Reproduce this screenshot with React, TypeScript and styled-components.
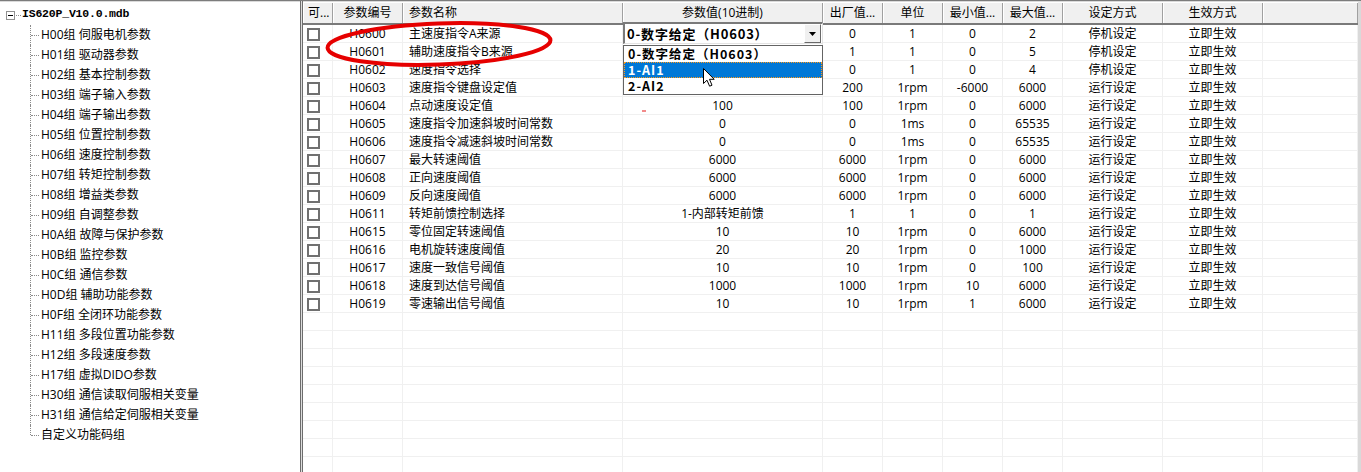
import React from 'react';
import styled, { createGlobalStyle } from 'styled-components';

const GlobalStyle = createGlobalStyle`
  html, body {
    margin: 0;
    padding: 0;
    background: #fff;
  }
  body {
    font-family: 'Open Sans', 'Noto Sans CJK SC', sans-serif;
    font-size: 12px;
    color: #000;
  }
  * {
    box-sizing: border-box;
  }
`;

type Align = 'left' | 'center';

interface Column {
  title: string;
  width: number;
  align: Align;
  pad?: number;
}

const columns: Column[] = [
  { title: '可...', width: 30, align: 'left', pad: 5 },
  { title: '参数编号', width: 70, align: 'center' },
  { title: '参数名称', width: 220, align: 'left', pad: 6 },
  { title: '参数值(10进制)', width: 200, align: 'center' },
  { title: '出厂值...', width: 60, align: 'center' },
  { title: '单位', width: 60, align: 'center' },
  { title: '最小值...', width: 60, align: 'center' },
  { title: '最大值...', width: 60, align: 'center' },
  { title: '设定方式', width: 100, align: 'center' },
  { title: '生效方式', width: 100, align: 'center' },
  { title: '', width: 95, align: 'center' },
];

const gridTemplate = columns.map((c) => `${c.width}px`).join(' ');

const groups = [
  'H00组 伺服电机参数',
  'H01组 驱动器参数',
  'H02组 基本控制参数',
  'H03组 端子输入参数',
  'H04组 端子输出参数',
  'H05组 位置控制参数',
  'H06组 速度控制参数',
  'H07组 转矩控制参数',
  'H08组 增益类参数',
  'H09组 自调整参数',
  'H0A组 故障与保护参数',
  'H0B组 监控参数',
  'H0C组 通信参数',
  'H0D组 辅助功能参数',
  'H0F组 全闭环功能参数',
  'H11组 多段位置功能参数',
  'H12组 多段速度参数',
  'H17组 虚拟DIDO参数',
  'H30组 通信读取伺服相关变量',
  'H31组 通信给定伺服相关变量',
  '自定义功能码组',
];

// code, name, value, factory, unit, min, max, setMode
const params: string[][] = [
  ['H0600', '主速度指令A来源', '', '0', '1', '0', '2', '停机设定'],
  ['H0601', '辅助速度指令B来源', '', '1', '1', '0', '5', '停机设定'],
  ['H0602', '速度指令选择', '', '0', '1', '0', '4', '停机设定'],
  ['H0603', '速度指令键盘设定值', '', '200', '1rpm', '-6000', '6000', '运行设定'],
  ['H0604', '点动速度设定值', '100', '100', '1rpm', '0', '6000', '运行设定'],
  ['H0605', '速度指令加速斜坡时间常数', '0', '0', '1ms', '0', '65535', '运行设定'],
  ['H0606', '速度指令减速斜坡时间常数', '0', '0', '1ms', '0', '65535', '运行设定'],
  ['H0607', '最大转速阈值', '6000', '6000', '1rpm', '0', '6000', '运行设定'],
  ['H0608', '正向速度阈值', '6000', '6000', '1rpm', '0', '6000', '运行设定'],
  ['H0609', '反向速度阈值', '6000', '6000', '1rpm', '0', '6000', '运行设定'],
  ['H0611', '转矩前馈控制选择', '1-内部转矩前馈', '1', '1', '0', '1', '运行设定'],
  ['H0615', '零位固定转速阈值', '10', '10', '1rpm', '0', '6000', '运行设定'],
  ['H0616', '电机旋转速度阈值', '20', '20', '1rpm', '0', '1000', '运行设定'],
  ['H0617', '速度一致信号阈值', '10', '10', '1rpm', '0', '100', '运行设定'],
  ['H0618', '速度到达信号阈值', '1000', '1000', '1rpm', '10', '6000', '运行设定'],
  ['H0619', '零速输出信号阈值', '10', '10', '1rpm', '1', '6000', '运行设定'],
];

const EMPTY_ROWS = 9;

const options = ['0-数字给定（H0603）', '1-AI1', '2-AI2'];

const Frame = styled.div`
  position: relative;
  display: flex;
  width: 1361px;
  height: 472px;
  overflow: hidden;
  border-top: 1px solid #7c7c7c;
  background: #fff;
`;

/* ---------- tree ---------- */

const TreePanel = styled.div`
  width: 300px;
  flex: none;
  border-top: 1px solid #dadada;
  padding-top: 1px;
`;

const TreeRoot = styled.div`
  display: flex;
  align-items: center;
  height: 22px;
  padding-left: 6px;
`;

const ExpandBox = styled.span`
  position: relative;
  width: 9px;
  height: 9px;
  margin-top: 2px;
  border: 1px solid #919191;
  background: #fff;

  &::after {
    content: '';
    position: absolute;
    left: 1px;
    right: 1px;
    top: 3px;
    height: 1px;
    background: #000;
  }
`;

const RootConnector = styled.span`
  width: 5px;
  margin: 2px 1px 0 1px;
  border-top: 1px dotted #8a8a8a;
`;

const RootTitle = styled.span`
  font-family: 'Liberation Mono', 'Noto Sans CJK SC', monospace;
  font-weight: 700;
  font-size: 11.5px;
  letter-spacing: -0.2px;
  line-height: 20px;
`;

const TreeItem = styled.div<{ $last?: boolean }>`
  position: relative;
  height: 20px;
  line-height: 20px;
  padding-left: 41px;
  white-space: nowrap;

  &::before {
    content: '';
    position: absolute;
    left: 30px;
    top: 0;
    bottom: ${(p) => (p.$last ? '10px' : '0')};
    border-left: 1px dotted #8a8a8a;
  }

  &::after {
    content: '';
    position: absolute;
    left: 31px;
    top: 10px;
    width: 8px;
    border-top: 1px dotted #8a8a8a;
  }
`;

const Splitter = styled.div`
  width: 3px;
  flex: none;
  border-left: 1px solid #6d6d6d;
  border-right: 1px solid #6d6d6d;
  background: #dcdcdc;
`;

/* ---------- grid ---------- */

const GridPanel = styled.div`
  flex: 1;
  border-top: 1px solid #dadada;
  padding-top: 1px;
  border-right: 3px solid #d9d9d9;
  overflow: hidden;
`;

const HeaderRow = styled.div`
  display: grid;
  grid-template-columns: ${gridTemplate};
  height: 22px;
  border-bottom: 2px solid #7a7a7a;
  background: #f0f0f0;
`;

const HeaderCell = styled.div<{ $align: Align; $pad: number }>`
  height: 20px;
  line-height: 20px;
  text-align: ${(p) => p.$align};
  padding-left: ${(p) => p.$pad}px;
  border-right: 1px solid #a0a0a0;
  box-shadow: inset 1px 0 0 #fff;
  white-space: nowrap;
  overflow: hidden;
`;

const Row = styled.div`
  display: grid;
  grid-template-columns: ${gridTemplate};
  height: 18px;
`;

const Cell = styled.div<{ $align: Align; $pad: number }>`
  position: relative;
  height: 18px;
  line-height: 18px;
  text-align: ${(p) => p.$align};
  padding-left: ${(p) => p.$pad}px;
  border-right: 1px solid #f0f0f0;
  border-bottom: 1px solid #f0f0f0;
  white-space: nowrap;
`;

const CheckBox = styled.span`
  display: inline-block;
  width: 13px;
  height: 13px;
  margin-top: 3px;
  vertical-align: top;
  border: 2px solid #707070;
  background: #fff;
`;

/* ---------- combo editor (overlay) ---------- */

const Combo = styled.div`
  position: absolute;
  left: 0;
  top: -3px;
  width: 200px;
  height: 22px;
  z-index: 5;
  display: flex;
  align-items: center;
  border-style: solid;
  border-width: 2px 1px 1px 2px;
  border-color: #7a7a7a #e3e3e3 #e3e3e3 #7a7a7a;
  background: #fff;
  text-align: left;
`;

const ComboText = styled.span`
  flex: 1;
  padding-left: 2px;
  font-family: 'Noto Sans CJK SC', sans-serif;
  font-weight: 700;
  font-size: 13px;
  letter-spacing: 0.8px;
  line-height: 18px;
`;

const ComboButton = styled.span`
  display: flex;
  align-items: center;
  justify-content: center;
  width: 17px;
  height: 19px;
  margin-right: 1px;
  background: #f0f0f0;
  border-style: solid;
  border-width: 1px;
  border-color: #fff #696969 #696969 #fff;
`;

const DropList = styled.div`
  position: absolute;
  left: 0;
  top: 20px;
  width: 200px;
  height: 50px;
  z-index: 5;
  border: 1px solid #646464;
  background: #fff;
  text-align: left;
`;

const Option = styled.div<{ $selected?: boolean }>`
  height: 16px;
  line-height: 14px;
  padding-left: 3px;
  font-family: 'Noto Sans CJK SC', sans-serif;
  font-weight: 700;
  font-size: 12.5px;
  letter-spacing: 1px;
  color: ${(p) => (p.$selected ? '#fff' : '#000')};
  background: ${(p) => (p.$selected ? '#0078d7' : 'transparent')};
  border: 1px dotted ${(p) => (p.$selected ? '#ff9a1a' : 'transparent')};
`;

const Mark = styled.svg`
  position: absolute;
  left: 320px;
  top: 13px;
  pointer-events: none;
  z-index: 8;
`;

const Cursor = styled.svg`
  position: absolute;
  left: 702px;
  top: 66px;
  z-index: 9;
`;

const Speck = styled.span`
  position: absolute;
  left: 642px;
  top: 109px;
  width: 4px;
  height: 2px;
  background: #f28b8b;
`;

const ComboEditor: React.FC = () => (
  <>
    <Combo>
      <ComboText>{options[0]}</ComboText>
      <ComboButton>
        <svg width="7" height="4" viewBox="0 0 7 4">
          <polygon points="0,0 7,0 3.5,4" fill="#000" />
        </svg>
      </ComboButton>
    </Combo>
    <DropList>
      {options.map((o, i) => (
        <Option key={o} $selected={i === 1}>
          {o}
        </Option>
      ))}
    </DropList>
  </>
);

const App: React.FC = () => {
  const rows = [...params, ...Array.from({ length: EMPTY_ROWS }, () => [] as string[])];

  return (
    <>
      <GlobalStyle />
      <Frame>
        <TreePanel>
          <TreeRoot>
            <ExpandBox />
            <RootConnector />
            <RootTitle>IS620P_V10.0.mdb</RootTitle>
          </TreeRoot>
          {groups.map((g, i) => (
            <TreeItem key={g} $last={i === groups.length - 1}>
              {g}
            </TreeItem>
          ))}
        </TreePanel>
        <Splitter />
        <GridPanel>
          <HeaderRow>
            {columns.map((c, i) => (
              <HeaderCell key={i} $align={c.align} $pad={c.pad || 0}>
                {c.title}
              </HeaderCell>
            ))}
          </HeaderRow>
          {rows.map((r, ri) => {
            const filled = r.length > 0;
            const values = filled
              ? ['', r[0], r[1], r[2], r[3], r[4], r[5], r[6], r[7], '立即生效', '']
              : columns.map(() => '');
            return (
              <Row key={ri}>
                {columns.map((c, ci) => (
                  <Cell key={ci} $align={c.align} $pad={ci === 0 ? 4 : c.pad || 0}>
                    {ci === 0 && filled ? <CheckBox /> : values[ci]}
                    {ci === 3 && ri === 0 ? <ComboEditor /> : null}
                  </Cell>
                ))}
              </Row>
            );
          })}
        </GridPanel>

        <Mark width="240" height="60" viewBox="0 0 240 60">
          <ellipse
            cx="119"
            cy="30"
            rx="111.5"
            ry="20.5"
            transform="rotate(-2 119 30)"
            fill="none"
            stroke="#e60000"
            strokeWidth="4"
          />
        </Mark>
        <Cursor width="14" height="21" viewBox="0 0 14 21">
          <path
            d="M1.5 1.5 L1.5 16.5 L5 13.2 L7.6 19.2 L10 18.2 L7.5 12.3 L12.2 12.3 Z"
            fill="#fff"
            stroke="#000"
            strokeWidth="1"
            strokeLinejoin="miter"
          />
        </Cursor>
        <Speck />
      </Frame>
    </>
  );
};

export default App;
